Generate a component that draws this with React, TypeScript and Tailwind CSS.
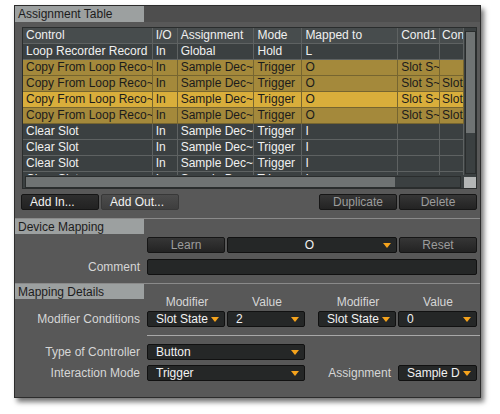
import React from 'react';

const FONT = { fontFamily: '"Liberation Sans", Arial, sans-serif' };

const cols = [130, 25, 77, 48, 96, 42, 24];
const heads = ['Control', 'I/O', 'Assignment', 'Mode', 'Mapped to', 'Cond1', 'Con'];

type Row = { cells: string[]; tone: 'dark' | 'gold' | 'bright' };

const rows: Row[] = [
  { cells: ['Loop Recorder Record', 'In', 'Global', 'Hold', 'L', '', ''], tone: 'dark' },
  { cells: ['Copy From Loop Reco~', 'In', 'Sample Dec~', 'Trigger', 'O', 'Slot S~', ''], tone: 'gold' },
  { cells: ['Copy From Loop Reco~', 'In', 'Sample Dec~', 'Trigger', 'O', 'Slot S~', 'Slot'], tone: 'gold' },
  { cells: ['Copy From Loop Reco~', 'In', 'Sample Dec~', 'Trigger', 'O', 'Slot S~', 'Slot'], tone: 'bright' },
  { cells: ['Copy From Loop Reco~', 'In', 'Sample Dec~', 'Trigger', 'O', 'Slot S~', 'Slot'], tone: 'gold' },
  { cells: ['Clear Slot', 'In', 'Sample Dec~', 'Trigger', 'I', '', ''], tone: 'dark' },
  { cells: ['Clear Slot', 'In', 'Sample Dec~', 'Trigger', 'I', '', ''], tone: 'dark' },
  { cells: ['Clear Slot', 'In', 'Sample Dec~', 'Trigger', 'I', '', ''], tone: 'dark' },
  { cells: ['Clear Slot', 'In', 'Sample Dec~', 'Trigger', 'I', '', ''], tone: 'dark' },
];

function Arrow() {
  return (
    <svg width="8" height="5" viewBox="0 0 8 5" className="shrink-0">
      <polygon points="0,0 8,0 4,5" fill="#f5a31c" />
    </svg>
  );
}

function SectionHeader({ title, dark }: { title: string; dark?: boolean }) {
  return (
    <div className={`flex h-[16px] ${dark ? 'bg-[#4e4e4e]' : 'border-t border-[#8a8a8a]'}`}>
      <div className="w-[129px] bg-[#9ca0a0] text-[#1c1c1c] text-[12px] leading-[16px] pl-[3px]">{title}</div>
    </div>
  );
}

function Btn({ label, w, tone }: { label: string; w: string; tone: 'dim' | 'dark' | 'light' }) {
  const bg =
    tone === 'light'
      ? 'bg-gradient-to-b from-[#4c4c4c] to-[#3e3e3e] text-[#f2f2f2] border-[#383838]'
      : tone === 'dark'
        ? 'bg-gradient-to-b from-[#2e2e2e] to-[#222] text-[#f2f2f2] border-[#151515]'
        : 'bg-gradient-to-b from-[#363636] to-[#232323] text-[#9c9c9c] border-[#161616]';
  return (
    <div className={`${w} h-[16px] border rounded-[2px] text-[12px] leading-[14px] flex items-center ${tone === 'dim' ? 'justify-center' : 'pl-[8px]'} ${bg}`}>
      {label}
    </div>
  );
}

function Drop({ label, w, center }: { label: string; w: string; center?: boolean }) {
  return (
    <div className={`${w} h-[16px] border border-[#111] rounded-[2px] bg-[#252727] text-[#f2f2f2] text-[12px] leading-[14px] flex items-center pl-[8px] pr-[5px]`}>
      <span className={`flex-1 whitespace-nowrap ${center ? 'text-center' : ''}`}>{label}</span>
      <Arrow />
    </div>
  );
}

function Label({ children }: { children: React.ReactNode }) {
  return <div className="w-[125px] text-right text-[12px] leading-[16px] text-[#d6d6d6]">{children}</div>;
}

export default function App() {
  return (
    <div className="w-[500px] h-[414px] bg-white overflow-hidden" style={FONT}>
      <div className="ml-[14px] mt-[5px] w-[467px] h-[393px] bg-[#585858] border border-[#2c2c2c] shadow-[3px_4px_5px_rgba(0,0,0,0.55)] flex flex-col">
        <SectionHeader title="Assignment Table" dark />

        {/* table */}
        <div className="ml-[7px] mt-[5px] w-[455px] h-[162px] border border-[#2a2d2d] bg-[#3b4041] flex">
          <div className="flex flex-col w-[441px]">
            <div className="h-[148px] overflow-hidden">
              <div className="flex h-[16px] bg-[#474c4d]">
                {heads.map((h, i) => (
                  <div key={h} style={{ width: cols[i] }} className={`border-r border-b border-[#5e6262] text-[12px] leading-[15px] text-[#f0f0f0] ${i === 6 ? 'pl-[2px]' : 'pl-[3px]'} overflow-hidden whitespace-nowrap`}>
                    {h}
                  </div>
                ))}
              </div>
              {rows.map((r, ri) => {
                const bg = r.tone === 'bright' ? 'bg-[#d9ae3b]' : r.tone === 'gold' ? 'bg-[#a4893b]' : 'bg-[#3b4041]';
                const fg = r.tone === 'dark' ? 'text-[#f0f0f0]' : 'text-[#1b1b1b]';
                const line = r.tone === 'dark' ? 'border-[#5e6262]' : 'border-[#766530]';
                return (
                  <div key={ri} className={`flex h-[16px] ${bg} ${fg}`}>
                    {r.cells.map((c, i) => (
                      <div key={i} style={{ width: cols[i] }} className={`border-r border-b ${line} text-[12px] leading-[15px] ${i === 6 ? 'pl-[2px]' : 'pl-[3px]'} overflow-hidden whitespace-nowrap`}>
                        {c}
                      </div>
                    ))}
                  </div>
                );
              })}
            </div>
            <div className="h-[12px] mt-[1px] ml-[2px] w-[436px] border border-[#2a2d2d] bg-[#3b4041] flex">
              <div className="w-[369px] bg-[#6f7373]" />
            </div>
          </div>
          <div className="w-[13px] flex flex-col items-center">
            <div className="mt-[3px] w-[11px] h-[143px] border border-[#2a2d2d] flex flex-col">
              <div className="h-[101px] bg-[#6f7373]" />
            </div>
            <div className="mt-[3px] w-[12px] h-[11px] bg-[#b4b6b6]" />
          </div>
        </div>

        {/* buttons */}
        <div className="flex mt-[5px] ml-[6px] gap-[2px]">
          <Btn label="Add In..." w="w-[78px]" tone="dark" />
          <Btn label="Add Out..." w="w-[78px]" tone="light" />
          <div className="w-[136px]" />
          <Btn label="Duplicate" w="w-[78px]" tone="dim" />
          <Btn label="Delete" w="w-[78px]" tone="dim" />
        </div>

        <div className="mt-[8px]">
          <SectionHeader title="Device Mapping" />
        </div>
        <div className="flex mt-[3px] ml-[132px] gap-[2px]">
          <Btn label="Learn" w="w-[78px]" tone="dim" />
          <Drop label="O" w="w-[170px]" center />
          <Btn label="Reset" w="w-[78px]" tone="dim" />
        </div>
        <div className="flex items-center mt-[6px] gap-[7px]">
          <Label>Comment</Label>
          <div className="w-[330px] h-[16px] border border-[#111] rounded-[2px] bg-[#252727]" />
        </div>

        <div className="mt-[8px]">
          <SectionHeader title="Mapping Details" />
        </div>
        <div className="flex -mt-[3px] ml-[132px] h-[13px] text-[12px] leading-[13px] text-[#d6d6d6]">
          <div className="w-[80px] text-center">Modifier</div>
          <div className="w-[80px] text-center">Value</div>
          <div className="w-[11px]" />
          <div className="w-[80px] text-center">Modifier</div>
          <div className="w-[80px] text-center">Value</div>
        </div>
        <div className="flex items-center mt-[2px]">
          <Label>Modifier Conditions</Label>
          <div className="flex gap-[2px] ml-[7px]">
            <Drop label="Slot State" w="w-[78px]" />
            <Drop label="2" w="w-[78px]" />
          </div>
          <div className="flex gap-[2px] ml-[13px]">
            <Drop label="Slot State" w="w-[78px]" />
            <Drop label="0" w="w-[79px]" />
          </div>
        </div>
        <div className="ml-[132px] mt-[8px] h-px bg-[#a8a8a8]" />
        <div className="flex items-center mt-[8px] gap-[7px]">
          <Label>Type of Controller</Label>
          <Drop label="Button" w="w-[158px]" />
        </div>
        <div className="flex items-center mt-[5px]">
          <Label>Interaction Mode</Label>
          <div className="ml-[7px]">
            <Drop label="Trigger" w="w-[158px]" />
          </div>
          <div className="w-[86px] text-right text-[12px] leading-[16px] text-[#d6d6d6]">Assignment</div>
          <div className="ml-[7px]">
            <Drop label="Sample D" w="w-[79px]" />
          </div>
        </div>
      </div>
    </div>
  );
}
